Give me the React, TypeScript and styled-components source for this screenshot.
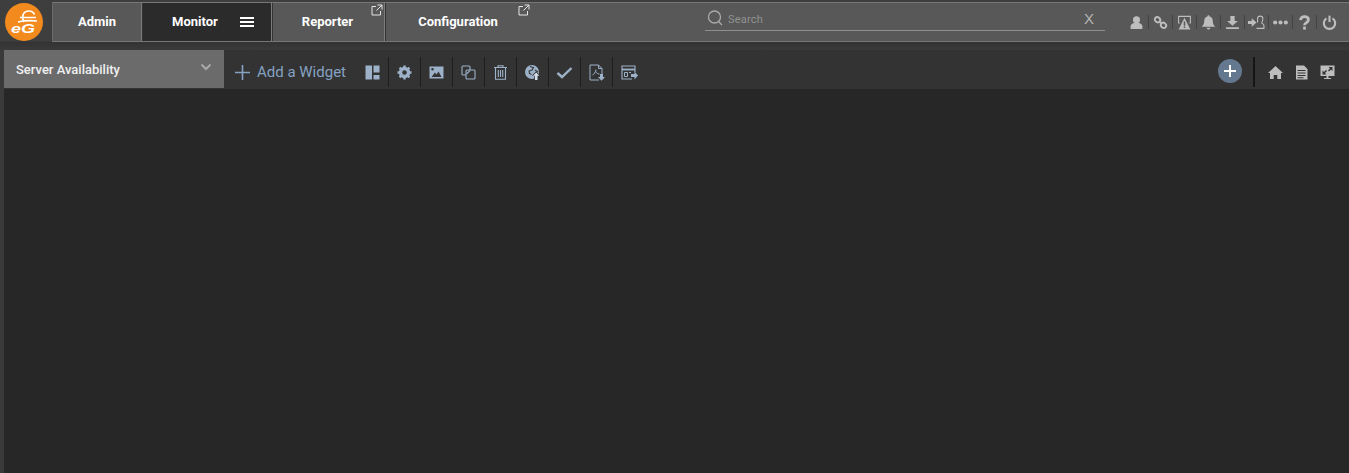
import React from "react";
import styled, { createGlobalStyle } from "styled-components";

const Global = createGlobalStyle`
  html, body { margin: 0; padding: 0; background: #272727; }
  body { font-family: Roboto, "Liberation Sans", sans-serif; }
  #root { height: 473px; overflow: hidden; }
  * { box-sizing: border-box; }
`;

const Page = styled.div`
  width: 1349px;
  height: 473px;
  display: flex;
  flex-direction: column;
  background: #3a3a3a;
  overflow: hidden;
`;

const Header = styled.header`
  height: 50px;
  flex: none;
  display: flex;
  align-items: flex-start;
  padding: 2px 0 0 5px;
  background: linear-gradient(#3e3e3e 0, #3e3e3e 41px, #333 42px, #3a3a3a 50px);
`;

const Logo = styled.svg`
  width: 38px;
  height: 38px;
  margin: 1px 9px 0 0;
  flex: none;
`;

const NavBar = styled.nav`
  flex: 1;
  height: 40px;
  display: flex;
  align-items: stretch;
  background: #585858;
  border: 1px solid #777;
  border-right: none;
  border-left: 1px solid #6a6a6a;
`;

const Tab = styled.div<{ $w: number; $active?: boolean; $plain?: boolean }>`
  position: relative;
  width: ${(p) => p.$w}px;
  flex: none;
  display: flex;
  align-items: center;
  justify-content: center;
  padding-bottom: 2px;
  font-size: 13px;
  font-weight: 700;
  color: #fff;
  background: ${(p) => (p.$active ? "#2b2b2b" : "transparent")};
  border-right: ${(p) => (p.$plain ? "none" : "1px solid #7c7c7c")};
  box-shadow: ${(p) => (p.$plain ? "none" : "1px 0 0 #333")};
  margin-right: 1px;
`;

const TabLabel = styled.span<{ $shift?: number }>`
  transform: translateX(${(p) => p.$shift ?? 0}px);
`;

const ExternalMark = styled.svg<{ $right: number }>`
  position: absolute;
  top: 1px;
  right: ${(p) => p.$right}px;
  width: 12px;
  height: 12px;
`;

const Burger = styled.svg`
  position: absolute;
  left: 97px;
  top: 13px;
  width: 14px;
  height: 12px;
`;

const SearchBox = styled.div`
  width: 400px;
  height: 28px;
  margin-left: 174px;
  display: flex;
  align-items: center;
  gap: 4px;
  padding: 4px 11px 0 2px;
  border-bottom: 1px solid #8f8f8f;
  color: #929292;
  font-size: 11px;
`;

const SearchText = styled.span`
  flex: 1;
  letter-spacing: 0.2px;
  padding-top: 1px;
`;

const ClearX = styled.span`
  color: #b4b4b4;
  font-size: 15px;
  font-family: "Liberation Sans", sans-serif;
`;

const TopIcons = styled.div`
  margin-left: 20px;
  height: 100%;
  display: flex;
  align-items: center;
`;

const TopCell = styled.div<{ $last?: boolean }>`
  width: 24px;
  height: 14px;
  display: flex;
  align-items: center;
  justify-content: center;
  border-right: ${(p) => (p.$last ? "none" : "1px solid #444")};
  color: #bdbdbd;
  svg { width: 15px; height: 15px; display: block; flex: none; }
`;

const Toolbar = styled.div`
  height: 39px;
  flex: none;
  display: flex;
  align-items: flex-start;
  margin-left: 4px;
  background: #333;
`;

const Select = styled.div`
  width: 220px;
  height: 38px;
  flex: none;
  display: flex;
  align-items: center;
  justify-content: space-between;
  padding: 0 12px;
  background: #6b6b6b;
  color: #f0f0f0;
  font-size: 13px;
  font-weight: 500;
`;

const Chevron = styled.svg`
  width: 12px;
  height: 8px;
  margin-top: -4px;
`;

const Tools = styled.div`
  flex: 1;
  height: 30px;
  margin-top: 7px;
  display: flex;
  align-items: center;
`;

const AddWidget = styled.div`
  display: flex;
  align-items: center;
  gap: 7px;
  width: 133px;
  padding-left: 11px;
  flex: none;
  color: #85a2c2;
  font-size: 15px;
  svg { width: 15px; height: 15px; flex: none; }
`;

const ToolCell = styled.div<{ $last?: boolean }>`
  width: 32px;
  height: 30px;
  flex: none;
  display: flex;
  align-items: center;
  justify-content: center;
  border-right: ${(p) => (p.$last ? "none" : "1px solid #1d1d1d")};
  color: #9db2c9;
  svg { width: 17px; height: 17px; display: block; }
`;

const Spacer = styled.div`
  flex: 1;
`;

const PlusRound = styled.div`
  width: 24px;
  height: 24px;
  margin-top: -2px;
  border-radius: 50%;
  background: #64788f;
  display: flex;
  align-items: center;
  justify-content: center;
  margin-right: 11px;
  svg { width: 14px; height: 14px; }
`;

const RightCell = styled.div`
  width: 26px;
  height: 30px;
  display: flex;
  align-items: center;
  justify-content: center;
  color: #bdbdbd;
  svg { width: 15px; height: 15px; display: block; }
`;

const RightDivider = styled.div`
  width: 2px;
  height: 30px;
  background: #151515;
  margin-right: 7px;
`;

const RightGroup = styled.div`
  display: flex;
  align-items: center;
  padding-right: 9px;
`;

const Main = styled.main`
  flex: 1;
  margin-left: 4px;
  background: #272727;
`;

const External = ({ right }: { right: number }) => (
  <ExternalMark $right={right} viewBox="0 0 12 12" fill="none" stroke="#e4e4e4" strokeWidth="1">
    <path d="M5 2.500H1v8.500h8.500V7M6.500 1h4.500v4.500M11 1L5.500 6.500" />
  </ExternalMark>
);

const topIcons = [
  <svg viewBox="0 0 14 14" fill="currentColor"><circle cx="7" cy="4.400" r="3.300" /><path d="M1.500 13v-2.400C1.500 8.600 3.500 7.600 5 7.400h4c1.600.2 3.500 1.200 3.500 3.200V13z" /></svg>,
  <svg viewBox="0 0 14 14" fill="none" stroke="currentColor" strokeWidth="1.800"><ellipse cx="4.200" cy="4.400" rx="2.600" ry="2.300" transform="rotate(40 4.200 4.400)" /><ellipse cx="9.800" cy="9.600" rx="2.600" ry="2.300" transform="rotate(40 9.800 9.600)" /><path d="M5.800 6l2.400 2.200" /></svg>,
  <svg viewBox="0 0 14 14" fill="currentColor"><path d="M2.500 8H1V.8h12V8h-1.500V7H12V1.800H2V7h.5z" /><path d="M7 2.500l5.500 11h-11z" /><path d="M6.300 6h1.400v4H6.300zM6.300 10.800h1.400v1.400H6.300z" fill="#585858" /></svg>,
  <svg viewBox="0 0 14 14" fill="currentColor"><path d="M7 .3c.6 0 1 .4 1 1 2 .5 3 2 3 4 0 2.700.7 3.900 2.300 5.700H.7C2.300 9.200 3 8 3 5.300c0-2 1-3.500 3-4 0-.6.4-1 1-1z" /><path d="M5.300 11.800h3.400C8.500 12.900 7.800 13.500 7 13.500s-1.500-.6-1.700-1.700z" /></svg>,
  <svg viewBox="0 0 14 14" fill="currentColor"><path d="M5 1h4v4.500h3L7 10 2 5.500h3zM1 11.500h12V13H1z" /></svg>,
  <svg viewBox="0 0 16 14" fill="currentColor" style={{ width: 17 }}><path d="M0 5.500h3.500V3L8 7l-4.500 4V8.500H0z" /><path d="M9 7V3.500C9 2 10.200 1 11.500 1S14 2 14 3.500 13.200 6 13 7.500c.8.800 2 1.200 2 2.500v2.500H8" fill="none" stroke="currentColor" strokeWidth="1" /></svg>,
  <svg viewBox="0 0 14 14" fill="currentColor"><circle cx="2" cy="7" r="1.900" /><circle cx="7" cy="7" r="1.900" /><circle cx="12" cy="7" r="1.900" /></svg>,
  <svg viewBox="0 0 14 14" fill="none" stroke="currentColor" strokeWidth="2.600"><path d="M3.300 4.800C3.500 2.600 5 1.500 7 1.500c2.200 0 3.700 1.200 3.700 3 0 2.600-3.700 2.500-3.700 5" /><path d="M7 10.800V13.600" /></svg>,
  <svg viewBox="0 0 14 14" fill="none" stroke="currentColor" strokeWidth="2"><path d="M4.200 3.200a5.300 5.300 0 1 0 5.600 0" /><path d="M7 .6v6" /></svg>,
];

const toolIcons = [
  <svg viewBox="0 0 17 17" fill="currentColor"><path d="M1.500 1.500h6.500v14H1.500zM9.500 1.500h6v7h-6zM9.500 11h6v4.500h-6z" /></svg>,
  <svg viewBox="0 0 17 17" fill="none" stroke="currentColor"><circle cx="8.500" cy="8.500" r="4" strokeWidth="3.400" /><path d="M8.500 1.500v3M8.500 12.500v3M1.500 8.500h3M12.500 8.500h3M3.600 3.600l2 2M11.400 11.400l2 2M13.400 3.600l-2 2M5.600 11.400l-2 2" strokeWidth="2.400" /></svg>,
  <svg viewBox="0 0 17 17" fill="currentColor"><path fillRule="evenodd" d="M1.500 2.500h14v12h-14zM3.500 13h10l-3-5.500-2 3-1.500-2zM4.500 4a1.300 1.300 0 1 0 0 2.600 1.300 1.300 0 0 0 0-2.600z" /></svg>,
  <svg viewBox="0 0 17 17" fill="none" stroke="currentColor" strokeWidth="1.100"><path d="M6 11H3a1 1 0 0 1-1-1V3a1 1 0 0 1 1-1h6a1 1 0 0 1 1 1v3" /><rect x="6" y="6" width="9" height="9" rx="1" /><path d="M6.500 10L10 6.500" /></svg>,
  <svg viewBox="0 0 17 17" fill="none" stroke="currentColor" strokeWidth="1.100"><path d="M2 3.500h13M6 3.500V1.800h5v1.700M3.500 3.500v11.700h10V3.500M6.300 6v7M8.500 6v7M10.700 6v7" /></svg>,
  <svg viewBox="0 0 17 17"><circle cx="8" cy="8" r="7" fill="currentColor" /><path d="M6 2.500l3.500 1-1.500 2.500-3 1 .5 2.500 2 1M11 6l3 2" fill="none" stroke="#333" strokeWidth="1.100" /><path d="M12.200 7.300l4.300 4.400h-2.300V16.500h-4v-4.800H7.900z" fill="#333" /><path d="M12.200 8.500l3.200 3.200h-1.900v4.300h-2.600v-4.300H9z" fill="#d5dee8" /></svg>,
  <svg viewBox="0 0 17 17" fill="none" stroke="currentColor" strokeWidth="2.400"><path d="M1.500 9l4.500 4 9.500-9" /></svg>,
  <svg viewBox="0 0 17 17"><path d="M10.500 1H2v15h9M10.500 1L14 4.500V10M10.500 1v3.500H14" fill="none" stroke="currentColor" strokeWidth="1" /><path d="M8 5.500c-.3 2.500-2 5-3.500 5.500M8 7.500c.5 1.500 1.500 2.500 3.500 2.500" fill="none" stroke="currentColor" strokeWidth="1" /><path d="M12 10h3v3h2l-3.500 3.700L10 13h2z" fill="currentColor" /></svg>,
  <svg viewBox="0 0 17 17"><path d="M11 15H1V2h13v6" fill="none" stroke="currentColor" strokeWidth="1.100" /><path d="M1 5.500h13" stroke="currentColor" strokeWidth="1.800" /><path d="M3.500 8.500h3v4h-3zM8 8.500h2" fill="none" stroke="currentColor" strokeWidth="1" /><path d="M10 10h3.500V7.500L17 11.500l-3.500 4V13H10z" fill="currentColor" /></svg>,
];

export default function App() {
  return (
    <Page>
      <Global />
      <Header>
        <Logo viewBox="0 0 38 38">
          <circle cx="19" cy="19" r="19" fill="#f28a1e" />
          <path d="M19 19c-3-5-1-11 5-11 3 0 4.500 1.500 5.500 3.500M15 14.500h16M13 19c6-1.500 13-1.500 19-1" fill="none" stroke="#fff" strokeWidth="1.700" />
          <text x="6" y="30" fontFamily="Liberation Sans, sans-serif" fontStyle="italic" fontWeight="700" fontSize="12" textLength="24" lengthAdjust="spacingAndGlyphs" fill="#fff">eG</text>
        </Logo>
        <NavBar>
          <Tab $w={89}><TabLabel>Admin</TabLabel></Tab>
          <Tab $w={129} $active>
            <TabLabel $shift={-12}>Monitor</TabLabel>
            <Burger viewBox="0 0 14 12" fill="#fff"><path d="M0 1h14v2H0zM0 5h14v2H0zM0 9h14v2H0z" /></Burger>
          </Tab>
          <Tab $w={112}><TabLabel $shift={-1}>Reporter</TabLabel><External right={1} /></Tab>
          <Tab $w={144} $plain><TabLabel>Configuration</TabLabel><External right={0} /></Tab>
          <SearchBox>
            <svg width="17" height="17" viewBox="0 0 17 17" fill="none" stroke="#aaa" strokeWidth="1.300"><circle cx="7.500" cy="7" r="6" /><path d="M11.500 11.500L15 15" /></svg>
            <SearchText>Search</SearchText>
            <ClearX>X</ClearX>
          </SearchBox>
          <TopIcons>
            {topIcons.map((icon, i) => (
              <TopCell key={i} $last={i === topIcons.length - 1}>{icon}</TopCell>
            ))}
          </TopIcons>
        </NavBar>
      </Header>
      <Toolbar>
        <Select>
          Server Availability
          <Chevron viewBox="0 0 12 8" fill="none" stroke="#a8a8a8" strokeWidth="2"><path d="M1.500 1.500L6 6l4.500-4.500" /></Chevron>
        </Select>
        <Tools>
          <AddWidget>
            <svg viewBox="0 0 15 15" stroke="#85a2c2" strokeWidth="1.600"><path d="M7.500 0v15M0 7.500h15" /></svg>
            Add a Widget
          </AddWidget>
          {toolIcons.map((icon, i) => (
            <ToolCell key={i} $last={i === toolIcons.length - 1}>{icon}</ToolCell>
          ))}
          <Spacer />
          <PlusRound>
            <svg viewBox="0 0 14 14" stroke="#fff" strokeWidth="2"><path d="M7 1v12M1 7h12" /></svg>
          </PlusRound>
          <RightDivider />
          <RightGroup>
            <RightCell>
              <svg viewBox="0 0 15 15" fill="currentColor"><path d="M7.500 1L15 8h-2v6H9.300v-4H5.700v4H2V8H0z" /></svg>
            </RightCell>
            <RightCell>
              <svg viewBox="0 0 15 15" fill="currentColor"><path fillRule="evenodd" d="M2 .5h8l3.500 3.500v10.500H2zM3.500 5v1h8V5zM3.500 7.500v1h8v-1zM3.500 10v1h8v-1zM3.500 12.300v1h6v-1z" /></svg>
            </RightCell>
            <RightCell>
              <svg viewBox="0 0 15 15"><path d="M.5.500h14v10.500H8.500v2H11v1H4v-1h2.500v-2h-6z" fill="currentColor" /><path d="M2.500 5.500v4h4L5 8l2-2-1-1-2 2zM8.500 2L10 3.500 8 5.500l1 1 2-2L12.500 6V2z" fill="#333" /></svg>
            </RightCell>
          </RightGroup>
        </Tools>
      </Toolbar>
      <Main />
    </Page>
  );
}
